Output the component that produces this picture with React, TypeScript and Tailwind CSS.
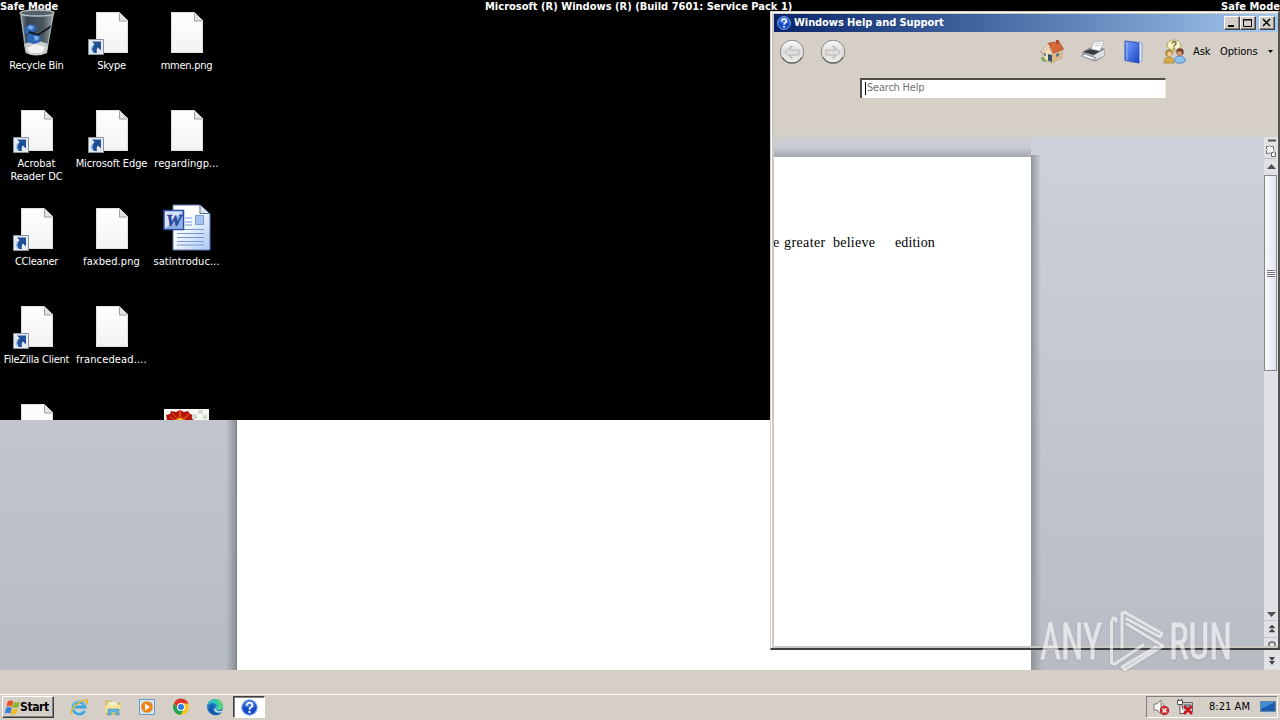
import React from 'react';

type IconKind = 'bin' | 'file' | 'shortcut' | 'word' | 'flower' | 'none';

interface DesktopItem {
  id: string;
  label: string;
  kind: IconKind;
  tracking?: string;
}

const desktopItems: DesktopItem[] = [
  { id: 'bin', label: 'Recycle Bin', kind: 'bin' },
  { id: 'skype', label: 'Skype', kind: 'shortcut' },
  { id: 'mmen', label: 'mmen.png', kind: 'file' },
  { id: 'acrobat', label: 'Acrobat\nReader DC', kind: 'shortcut', tracking: 'tracking-[-0.05px]' },
  { id: 'edge', label: 'Microsoft Edge', kind: 'shortcut', tracking: 'tracking-[-0.1px]' },
  { id: 'regarding', label: 'regardingp...', kind: 'file', tracking: 'tracking-[0.08px]' },
  { id: 'ccleaner', label: 'CCleaner', kind: 'shortcut' },
  { id: 'faxbed', label: 'faxbed.png', kind: 'file', tracking: 'tracking-[0.08px]' },
  { id: 'sat', label: 'satintroduc...', kind: 'word', tracking: 'tracking-[0.05px]' },
  { id: 'filezilla', label: 'FileZilla Client', kind: 'shortcut' },
  { id: 'france', label: 'francedead....', kind: 'file', tracking: 'tracking-[0.15px]' },
  { id: 'empty-1', label: '', kind: 'none' },
  { id: 'cut-file', label: '', kind: 'file' },
  { id: 'empty-2', label: '', kind: 'none' },
  { id: 'flower', label: '', kind: 'flower' },
];

const uiFont = "font-['DejaVu_Sans_Condensed','DejaVu_Sans',sans-serif] [font-stretch:condensed]";

const DesktopIcon: React.FC<{ kind: IconKind }> = ({ kind }) => {
  if (kind === 'none') return <div className="h-12 w-12" />;
  if (kind === 'bin') {
    return (
      <svg width="48" height="48" viewBox="1 0 48 48">
        <defs>
          <linearGradient id="glass" x1="0" x2="1">
            <stop offset="0" stopColor="#8d979d" />
            <stop offset=".2" stopColor="#35434f" />
            <stop offset=".7" stopColor="#4d5961" />
            <stop offset="1" stopColor="#a3abad" />
          </linearGradient>
        </defs>
        <path d="M8 5 13 44q11 6 22 0L42 5Z" fill="url(#glass)" />
        <path d="M12 36q12-6 24 0l-1 9q-11 5-21 0Z" fill="#c9cccb" />
        <path d="m15 40 8-4 10 3-3 6H18Z" fill="#f1f1ef" />
        <path d="m13 21 4-5 6 1 2 5-4 2-1 2 5-1 4 4-1 5-6 2-7-2v-5l2-4-4 1Z" fill="#2d66b8" />
        <path d="m15 20 3-3 4 2-2 3Zm7 8 4-1 1 4-4 2Z" fill="#79a8e6" />
        <path d="m17 24 9 3 15-10" stroke="#101a24" strokeWidth="2" fill="none" />
        <ellipse cx="25" cy="5" rx="17" ry="3" fill="#53616b" stroke="#b8c0c3" strokeWidth="1.3" />
        <path d="m9 7 5 35M41 7l-6 35" stroke="#c3cacc" strokeWidth="1" opacity=".7" />
      </svg>
    );
  }
  if (kind === 'word') {
    return (
      <svg width="48" height="48" viewBox="0 0 48 48">
        <defs>
          <linearGradient id="wordPage" x1="0" y1="0" x2="1" y2="1">
            <stop offset=".35" stopColor="#fff" />
            <stop offset="1" stopColor="#a9c6f6" />
          </linearGradient>
        </defs>
        <path d="M10 1H37L47 10V46H10Z" fill="url(#wordPage)" stroke="#5a75b0" />
        <path d="M37 1V9.500H46" fill="#dce6f5" stroke="#5a6c8c" />
        <path d="M22 14h7M22 18h7M22 21h7M14 25.500H41M14 29.500H41M14 33.500H41M14 37.500H41M14 41H41" stroke="#7397d3" />
        <path d="M32.500 11.500h8v9h-8Z" fill="#a6c2ed" stroke="#7b9bd4" />
        <path d="M1 6.500H20.500V25.500H1Z" fill="#d6e2fa" stroke="#284b9d" strokeWidth="1.5" />
        <path d="M20 7V25H2Z" fill="#6e92dc" opacity=".65" />
        <text x="3" y="21.500" fontFamily="Liberation Serif" fontStyle="italic" fontWeight="bold" fontSize="17" textLength="16" lengthAdjust="spacingAndGlyphs" fill="#26499c" stroke="#26499c" strokeWidth=".5">W</text>
      </svg>
    );
  }
  if (kind === 'flower') {
    return (
      <svg width="48" height="48" viewBox="0 -2 48 48">
        <path d="M1 7H46V40H1Z" fill="#f8f8f5" />
        <path d="m4 18-1-5 4-1 1-3 5 1 4-2 4 2 4-1 2 3 4 1-1 5Z" fill="#b41410" />
        <path d="m9 11 7 7 1-9 2 9 7-6-5 6h-8l-6-3" stroke="#e85a14" fill="none" />
        <path d="M13 18q4-4 8 0Z" fill="#f4c32a" />
        <path d="M29 12h5v5h-5ZM35 8h5v4h-5ZM40 13h4v4h-4Z" fill="#d3dad0" />
      </svg>
    );
  }
  return (
    <svg width="48" height="48" viewBox="0 0 48 48">
      <defs>
        <linearGradient id="paper" x1="0" y1="0" x2="0" y2="1">
          <stop offset="0" stopColor="#fff" />
          <stop offset="1" stopColor="#f3f3f3" />
        </linearGradient>
      </defs>
      <path d="M8 4H31L40 12.500V45H8Z" fill="url(#paper)" />
      <path d="M31.500 4.500V13H39.500" fill="#e4e4e4" stroke="#9d9d9d" />
      <path d="M8.500 4.500H31L39.500 13V44.500H8.500Z" fill="none" stroke="#dedede" />
      {kind === 'shortcut' && (
        <g>
          <path d="M.5 31.500h15v15H.5Z" fill="#e6ebf2" stroke="#8993a0" />
          <path d="M4 33.500h9v9l-3-3q-2 2-1 5.500H6Q2 41 6.500 36Z" fill="#1f4f96" />
          <path d="M5 44.500q-3-3-.5-7" stroke="#9cc2ea" strokeWidth="1.300" fill="none" />
        </g>
      )}
    </svg>
  );
};

const HelpIcon: React.FC<{ size: number }> = ({ size }) => (
  <svg width={size} height={size} viewBox="0 0 16 16">
    <circle cx="8" cy="8" r="7.300" fill="#1648c8" stroke="#91b7f6" strokeWidth="1" />
    <path d="M2.500 7A5.500 5.500 0 0 1 13.500 7Q8 9 2.500 7Z" fill="#4779e4" />
    <path d="M5.500 6q0-2.500 2.600-2.500T10.700 6q0 1.300-1.600 2Q8 8.700 8 10" fill="none" stroke="#fff" strokeWidth="1.700" />
    <circle cx="8" cy="12.200" r="1.100" fill="#fff" />
  </svg>
);

const NavButton: React.FC<{ flip?: boolean }> = ({ flip }) => (
  <svg width="26" height="26" viewBox="0 0 26 26" className={flip ? 'scale-x-[-1]' : ''}>
    <defs>
      <linearGradient id="navFill" x1="0" y1="0" x2="0" y2="1">
        <stop offset="0" stopColor="#fafafa" />
        <stop offset=".5" stopColor="#dedddb" />
        <stop offset="1" stopColor="#eeeeec" />
      </linearGradient>
    </defs>
    <circle cx="13" cy="13" r="11.800" fill="url(#navFill)" stroke="#8a8885" />
    <path d="M3 18A11.500 11.500 0 0 0 23 18" fill="none" stroke="#66635f" strokeWidth="1.200" />
    <path d="m6 13 7-6.500v1L10.500 11H20v5h-9.500l2.500 2.500v1Z" fill="#dededc" stroke="#b5b4b1" />
  </svg>
);

const HomeIcon = () => (
  <svg width="26" height="26" viewBox="0 0 26 26">
    <path d="m4 12 7-7 12 5v9l-11 5-8-4Z" fill="#efe0bd" stroke="#a58a61" strokeWidth=".7" />
    <path d="M13 14 23 10V19L12 24Z" fill="#dfb887" />
    <path d="m1.500 13 8-8 5 8-1 2-4-7-6 6Z" fill="#f6ece0" stroke="#a66a48" strokeWidth=".6" />
    <path d="M9.500 4 20 3l4.500 7-10 4Z" fill="#d66a38" stroke="#a54019" strokeWidth=".7" />
    <path d="M17 1h3v4h-3Z" fill="#b5472c" />
    <path d="m9 15 4 1v7l-4-1.500Z" fill="#31526c" />
    <path d="m5 14 2 .5V17l-2-.5ZM17 15l3-1v3l-3 1Z" fill="#597892" />
    <path d="m1.500 19 3-1 3 4-3 1Z" fill="#75a45b" />
  </svg>
);

const PrinterIcon = () => (
  <svg width="26" height="26" viewBox="0 0 26 26">
    <path d="m3 13 7-4 14 1v7l-9 5-12-5Z" fill="#aaaeb3" stroke="#62666b" strokeWidth=".7" />
    <path d="m3 13 8-3 11 1-8 5Z" fill="#36393e" />
    <path d="m14 3 10-1-4 10-9-2Z" fill="#fff" stroke="#a3a8ae" strokeWidth=".7" />
    <path d="m15 5 6-.5M14.500 7l6-.5" stroke="#c5c9ce" />
    <path d="m14 16 10-5v6l-9 4Z" fill="#dcdfe2" />
    <path d="m1 17 4-2 11 4-3 2Z" fill="#f3f4f4" stroke="#787b80" strokeWidth=".7" />
  </svg>
);

const BookIcon = () => (
  <svg width="26" height="26" viewBox="0 0 26 26">
    <defs>
      <linearGradient id="bookFill" x1="0" y1="0" x2="1" y2="1">
        <stop offset="0" stopColor="#7ca5fa" />
        <stop offset="1" stopColor="#1843ca" />
      </linearGradient>
    </defs>
    <path d="m4 2 14 1 3 1v18l-3 2-14-2Z" fill="#dbe7fb" stroke="#577bc8" strokeWidth=".6" />
    <path d="m4 2 14 2v20L4 21Z" fill="url(#bookFill)" stroke="#1d41a6" strokeWidth=".7" />
    <path d="M6 3v18" stroke="#94b4fa" />
  </svg>
);

const AskIcon = () => (
  <svg width="26" height="26" viewBox="0 0 26 26">
    <path d="m8 10 3 4 2-4" fill="#f3eeaa" stroke="#b3a663" />
    <ellipse cx="12" cy="6" rx="7" ry="5" fill="#f8f4c5" stroke="#b3a663" />
    <text x="9" y="10" fontFamily="Liberation Sans" fontWeight="bold" fontSize="10" fill="#716838">?</text>
    <circle cx="7" cy="14" r="3.600" fill="#a98231" />
    <circle cx="7.500" cy="15" r="2.400" fill="#f0c99b" />
    <path d="M2 24q0-6 5-6t5 6Z" fill="#d8ad45" stroke="#9d7b2a" strokeWidth=".7" />
    <circle cx="18" cy="13" r="3.700" fill="#773d2c" />
    <circle cx="17.500" cy="14.500" r="2.500" fill="#d09472" />
    <path d="M12.500 22q0-5 5-5t6 5l-3 2h-6Z" fill="#8fc0ee" stroke="#4277b5" strokeWidth=".8" />
  </svg>
);

const TitleButton: React.FC<{ children: React.ReactNode; name: string }> = ({ children, name }) => (
  <button aria-label={name} className="flex h-[14px] w-4 items-center justify-center border border-t-white border-l-white border-r-[#404040] border-b-[#404040] bg-[#d4d0c8] shadow-[inset_-1px_-1px_#808080]">
    <svg width="14" height="12" viewBox="0 0 14 12" fill="none" stroke="#000" className="shrink-0">{children}</svg>
  </button>
);

const DocScrollbar = () => (
  <div className="flex w-[14px] flex-col items-center bg-[#dfe1e5]">
    <svg width="14" height="38" viewBox="0 0 14 38" fill="none">
      <path d="M4 3.500h8" stroke="#555" strokeWidth="2" />
      <path d="M2.500 9.500h2l1-1 1 1h3v3l1 1-1 1v2h-3l-1-1-1 1h-2v-3l1-1-1-1Z" fill="#f7f7f7" stroke="#6c6c6c" />
      <path d="M7.500 15.500h2l1 1 1-1v4h-4Z" fill="#fff" stroke="#6c6c6c" />
      <path d="M0 21.500h12" stroke="#c2c4c7" />
      <path d="m3 32 4.500-5 4.500 5Z" fill="#505050" />
    </svg>
    <div className="flex h-[196px] w-[13px] items-center justify-center self-start border border-[#84888e] bg-linear-to-r from-[#f8fafc] to-[#e0e4e9]">
      <div className="h-[7px] w-2 bg-[repeating-linear-gradient(to_bottom,#74777b_0_1px,#f4f5f7_1px_2px)]" />
    </div>
    <div className="flex-1" />
    <svg width="14" height="36" viewBox="0 0 14 36">
      <path d="m3 2 4.500 5L12 2Z" fill="#505050" />
      <path d="M0 10.500h13M0 27.500h13" stroke="#c2c4c7" />
      <path d="m5 18 3-3 3 3Zm0 4 3-3 3 3Z" fill="#444" stroke="#444" strokeWidth=".5" />
      <path d="M5 36v-2q0-2 3-2t3 2v2" fill="none" stroke="#666" strokeWidth="1.500" />
    </svg>
  </div>
);

const HelpWindow = () => (
  <section className="absolute top-[11px] left-[770px] flex h-[639px] w-[510px] flex-col border-t border-r-2 border-b-2 border-l border-t-[#d4d0c8] border-r-[#55534f] border-b-[#404040] border-l-[#d4d0c8] bg-[#d5cfc7]">
    <div className="flex min-h-0 flex-1 flex-col border-t border-l border-white">
      <div className="flex min-h-0 flex-1 flex-col border-t border-b-2 border-l-2 border-[#cbc8c1]">
        <header className="flex h-[18px] shrink-0 items-center bg-linear-to-r from-[#0a246a] to-[#a6caf0] pr-[3px] pl-[3px]">
          <HelpIcon size={14} />
          <h1 className="ml-[3px] flex-1 text-[11px] font-bold tracking-[-0.08px] text-white">Windows Help and Support</h1>
          <div className="flex">
            <TitleButton name="Minimize"><path d="M3 9h6" strokeWidth="2" /></TitleButton>
            <TitleButton name="Maximize"><path d="M2.500 2.500h8v7h-8ZM2 3h9" /></TitleButton>
            <div className="w-[3px]" />
            <TitleButton name="Close"><path d="m3 2 7 7m0-7-7 7" strokeWidth="1.500" /></TitleButton>
          </div>
        </header>
        <div className="flex h-[39px] shrink-0 items-center pr-1 pl-[5px]">
          <div className="flex gap-[15px]">
            <NavButton />
            <NavButton flip />
          </div>
          <div className="ml-auto flex items-center">
            <div className="mr-[5px] flex gap-[15px]">
              <HomeIcon />
              <PrinterIcon />
              <BookIcon />
              <AskIcon />
            </div>
            <span className="w-[27px] pt-px text-[11px] tracking-[-0.1px]">Ask</span>
            <span className="w-[47px] pt-px text-[11px] tracking-[-0.1px]">Options</span>
            <svg width="7" height="4" viewBox="0 0 7 4"><path d="M1 0h5L3.500 3Z" /></svg>
          </div>
        </div>
        <div className="flex h-[66px] shrink-0 bg-linear-to-b from-[#d5cfc7] from-85% to-[#d3d1c6] pt-[7px] pl-[86px]">
          <div className="flex h-5 w-[306px] items-center border-t-2 border-r border-l-2 border-t-[#504e4a] border-l-[#504e4a] border-r-[#eceae5] bg-white pl-[3px] text-[11px] tracking-[-0.22px] text-[#747474]">
            <span className="mr-px -mt-px h-[13px] w-px bg-black" />
            <span className="-mt-px">Search Help</span>
          </div>
        </div>
        <div className="flex min-h-0 flex-1 bg-linear-to-b from-[#cdd1da] to-[#b9bdc5]">
          <div className="flex w-[257px] flex-col">
            <div className="h-[20px] shrink-0 bg-linear-to-b from-[#cfd0d3] via-[#c8ccd5] to-[#a3a7af]" />
            <article className="flex-1 overflow-hidden bg-white pt-[78px] font-['Liberation_Serif',serif] text-[14px] leading-4 whitespace-pre text-black">
              <p className="flex">
                <span className="-ml-px w-[11px]">e</span>
                <span className="w-[49px] tracking-[0.4px]">greater</span>
                <span className="w-[62px] tracking-[0.25px]">believe</span>
                <span className="tracking-[0.15px]">edition</span>
              </p>
            </article>
          </div>
          <div className="mt-[18px] w-[10px] bg-linear-to-r from-[#8f939b] to-transparent" />
          <div className="flex-1" />
          <DocScrollbar />
        </div>
      </div>
    </div>
  </section>
);

const StartFlag = () => (
  <svg width="17" height="17" viewBox="0 0 18 17" className="shrink-0">
    <path d="M4 2q3-2 6 0L8.500 8q-3-2-6 0Z" fill="#e65525" />
    <path d="M11 2.500q3 2 6-.5L15 8q-3 2-6 .5Z" fill="#80b72b" />
    <path d="M2.200 9q3-2 6 0l-1.500 6q-3-2-6 0Z" fill="#347fd8" />
    <path d="M9 9.500q3 2 6-.5l-2 6q-3 2-6 .5Z" fill="#f4bd25" />
  </svg>
);

const QuickLaunch = () => (
  <div className="flex items-center gap-4 pl-4">
    <svg width="18" height="18" viewBox="0 0 18 18" fill="none">
      <path d="M14.500 12.500A6 6 0 1 1 15 9H5" stroke="#39a5e1" strokeWidth="3" />
      <path d="M14 12A5.800 5.800 0 1 1 15 8" stroke="#8dd6f5" />
      <path d="M2 16.500Q-.5 14 5 8T16.500 2q1.500 1 0 4" stroke="#e7b72e" strokeWidth="1.600" />
    </svg>
    <svg width="18" height="18" viewBox="0 0 18 18">
      <path d="M2 3h5l1 2h8v11H2Z" fill="#e8c768" stroke="#c7a448" strokeWidth=".7" />
      <path d="M4 4h9v4H4Z" fill="#e8f2d8" />
      <path d="M1.500 7h15v8h-15Z" fill="#f8e499" />
      <path d="M4 17v-6h11v6h-3v-3H7v3Z" fill="#65b4df" stroke="#398dbd" strokeWidth=".6" />
    </svg>
    <svg width="18" height="18" viewBox="0 0 18 18">
      <path d="M1.500 1.500h15v15h-15Z" fill="#dcecf8" stroke="#6b9ac0" />
      <path d="M3.500 3.500h11v11h-11Z" fill="#bcd7ed" />
      <circle cx="9" cy="9" r="5.800" fill="#ef820e" />
      <path d="m7 5.500 5 3.500-5 3.500Z" fill="#fff" />
    </svg>
    <svg width="18" height="18" viewBox="0 0 18 18">
      <circle cx="9" cy="9" r="8" fill="#f7c51c" />
      <path d="M2 5A8 8 0 0 1 16.500 5.500H9L6 11Z" fill="#e0372b" />
      <path d="M2 5A8 8 0 0 0 8.500 17l3.500-6H6Z" fill="#20a553" />
      <circle cx="9" cy="9" r="4" fill="#fff" />
      <circle cx="9" cy="9" r="3" fill="#307de9" />
    </svg>
    <svg width="18" height="18" viewBox="0 0 18 18">
      <circle cx="9" cy="9" r="8" fill="#1a75ca" />
      <path d="M1 8Q3 1 9 1q7 0 8 7 0 4-5 4-3 0-2-2 2-4-3-5-4 0-6 3Z" fill="#35c6ba" />
      <path d="M9 1q7 0 8 7 0 4-5 4l1-7Z" fill="#5cd579" />
      <path d="M8 7q-4 5 2 8 3 1 6-1-3 4-8 3-5-2-5-6 1-4 5-4Z" fill="#135ba7" />
      <path d="M10 8q-2 4 2 5 3 1 5-1l-1 2q-6 2-8-2Z" fill="#d6e5ec" />
    </svg>
  </div>
);

const Taskbar = () => (
  <footer className="flex h-[27px] items-center border-t border-[#d5cfc7] bg-[#d5cfc7] shadow-[inset_0_1px_#fff]">
    <button className="ml-[2px] flex h-[22px] w-[52px] items-center border border-t-white border-l-white border-r-[#404040] border-b-[#404040] pl-px shadow-[inset_-1px_-1px_#808080]">
      <StartFlag />
      <span className="-ml-px text-[12px] font-bold tracking-[-0.4px]">Start</span>
    </button>
    <QuickLaunch />
    <div className="ml-[9px] flex h-[22px] w-8 items-center justify-center border border-t-[#404040] border-l-[#404040] border-r-white border-b-white bg-white shadow-[inset_1px_1px_#808080]">
      <HelpIcon size={17} />
    </div>
    <div className="mr-[2px] ml-auto flex h-[22px] w-[132px] items-center border border-t-[#808080] border-l-[#808080] border-r-white border-b-white pl-[5px]">
      <svg width="18" height="18" viewBox="0 0 18 18">
        <path d="M2 6h3l4-4v14l-4-4H2Z" fill="#f7f7f7" stroke="#7b7b7b" />
        <path d="M11 5q2 3 0 7" stroke="#999" fill="none" />
        <circle cx="12.500" cy="12.500" r="4.200" fill="#d8292c" stroke="#b41f24" />
        <path d="m10.500 10.500 4 4m0-4-4 4" stroke="#fff" strokeWidth="1.400" />
      </svg>
      <svg width="18" height="18" viewBox="0 0 18 18" className="ml-[6px]">
        <path d="M6.500 4.500h10v9h-10Z" fill="#c4c9cc" stroke="#666" />
        <path d="M8 6h7v5H8Z" fill="#7f9192" />
        <path d="M1.500 2.500h5v4h-5ZM2.500 1v2M5.500 1v2M4 7v8.500h5" fill="#fff" stroke="#555" />
        <path d="m8 8 8 8m0-8-8 8" stroke="#cf1720" strokeWidth="2.500" />
      </svg>
      <time className="ml-[15px] w-[51px] text-[11px] tracking-[0.05px] whitespace-nowrap">8:21 AM</time>
      <svg width="16" height="16" viewBox="0 0 16 16" className="shrink-0">
        <path d="M.5 2.500h15v10H.5Z" fill="#1e5baf" stroke="#6b87a6" />
        <path d="M1 3h14L1 10Z" fill="#438cd5" />
        <path d="M4 13h8l2 2H2Z" fill="#c4d1de" />
      </svg>
    </div>
  </footer>
);

const Watermark = () => (
  <svg className="absolute top-[604px] left-[1036px] overflow-visible opacity-60 drop-shadow-[0_1px_1px_#7776]" width="220" height="80" viewBox="0 0 220 80">
    <g fill="#fff" stroke="#fff" strokeWidth=".8" fontFamily="Roboto" fontSize="50">
      <text x="4" y="54.500" textLength="62" lengthAdjust="spacingAndGlyphs">ANY</text>
      <text x="133" y="54.500" textLength="63" lengthAdjust="spacingAndGlyphs">RUN</text>
    </g>
    <g fill="none" stroke="#fff" strokeWidth="3" strokeLinejoin="round" strokeLinecap="round">
      <path d="M80 17V15L77 14 75.500 18V59L79 60 107 41" />
      <path d="M86 43V9L89 8.500 126 29.500 124 33 91 15" />
      <path d="M91 20 127 42 89 65.500 86 63 120 43" />
    </g>
  </svg>
);

const App: React.FC = () => (
  <main className={`relative flex h-[720px] w-[1280px] flex-col overflow-hidden bg-[#d5cfc7] text-black ${uiFont}`}>
    <div className="h-[420px] shrink-0 overflow-hidden bg-black text-white">
      <div className="flex h-[11px] justify-between text-[11px] leading-[14px] font-bold whitespace-nowrap">
        <span className="w-[485px] tracking-[-0.05px]">Safe Mode</span>
        <span className="flex-1 tracking-[0.01px]">Microsoft (R) Windows (R) (Build 7601: Service Pack 1)</span>
        <span className="tracking-[0.02px]">Safe Mode</span>
      </div>
      <div className="-mt-[3px] grid w-[225px] auto-rows-[98px] grid-cols-3">
        {desktopItems.map((item) => (
          <div key={item.id} className="-ml-[2px] flex flex-col items-center">
            <DesktopIcon kind={item.kind} />
            <p className={`mt-[3px] text-center text-[11px] leading-[13px] whitespace-pre ${item.tracking || 'tracking-[-0.25px]'}`}>{item.label}</p>
          </div>
        ))}
      </div>
    </div>
    <div className="flex h-[250px] shrink-0 bg-linear-to-b from-[#c2c5cd] to-[#b7bbc2]">
      <div className="w-[226px]" />
      <div className="w-[11px] border-r border-[#7c8087] bg-linear-to-r from-transparent to-[#8d9198]" />
      <div className="w-[794px] bg-white" />
      <div className="w-[11px] bg-linear-to-r from-[#8d9198] to-transparent" />
      <div className="flex-1" />
      <div className="flex w-4 items-end justify-center bg-[#dfe1e5] pb-1">
        <svg width="10" height="9" viewBox="0 0 10 9"><path d="M2 0h6L5 4ZM2 4h6L5 8Z" fill="#444" /></svg>
      </div>
    </div>
    <div className="h-[23px] shrink-0" />
    <Taskbar />
    <HelpWindow />
    <Watermark />
  </main>
);

export default App;
